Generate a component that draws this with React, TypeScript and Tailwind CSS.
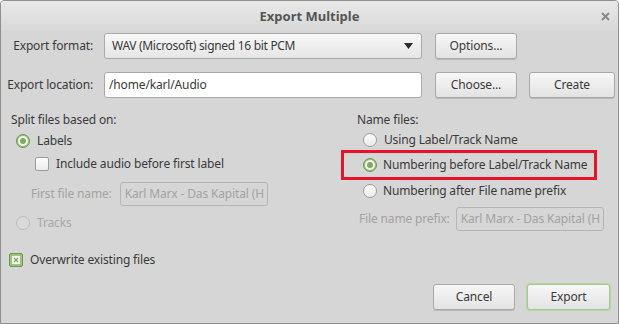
import { ReactNode } from "react";

const Radio = ({ checked = false, disabled = false }: { checked?: boolean; disabled?: boolean }) => {
  if (checked) {
    return (
      <span className="w-[14px] h-[14px] rounded-full border border-[#6f9552] bg-[#9cc47e] flex items-center justify-center shrink-0">
        <span className="w-[10px] h-[10px] rounded-full bg-[#f4f4f4] flex items-center justify-center">
          <span className="w-[6px] h-[6px] rounded-full bg-[#7fab5e]" />
        </span>
      </span>
    );
  }
  return (
    <span
      className={`w-[14px] h-[14px] rounded-full border shrink-0 ${
        disabled ? "border-[#bdbdbd] bg-[#d9d9d9]" : "border-[#9d9d9d] bg-gradient-to-b from-[#fcfcfc] to-[#ececec]"
      }`}
    />
  );
};

const Checkbox = ({ checked = false }: { checked?: boolean }) => {
  if (checked) {
    return (
      <span className="w-[14px] h-[14px] rounded-[2px] border border-[#6f9552] bg-[#9cc47e] flex items-center justify-center shrink-0">
        <span className="w-[8px] h-[8px] bg-[#f2f2f2] flex items-center justify-center">
          <svg width="6" height="6" viewBox="0 0 6 6">
            <path d="M1 1L5 5M5 1L1 5" stroke="#7fab5e" strokeWidth="1.4" />
          </svg>
        </span>
      </span>
    );
  }
  return <span className="w-[14px] h-[14px] rounded-[2px] border border-[#9d9d9d] bg-gradient-to-b from-[#fcfcfc] to-[#ececec] shrink-0" />;
};

const Button = ({ children, w, primary = false }: { children: ReactNode; w: string; primary?: boolean }) => (
  <div
    className={`${w} h-[26px] rounded-[3px] border bg-gradient-to-b from-[#f7f7f7] to-[#e3e3e3] shadow-[0_1px_0_#b8b8b8] flex items-center justify-center text-[#3a3a3a] ${
      primary ? "border-[#a6c98c] ring-1 ring-[#b8d6a2]" : "border-[#a9a9a9]"
    }`}>
    {children}
  </div>
);

const App = () => {
  return (
    <div
      className="w-[619px] h-[324px] bg-[#d6d6d6] border border-[#8e8e8e] rounded-t-[4px] flex flex-col text-[12px] tracking-[-0.15px] text-[#3a3a3a] overflow-hidden whitespace-nowrap"
      style={{ fontFamily: '"Noto Sans", "Open Sans", sans-serif' }}>
      {/* titlebar */}
      <div className="h-[30px] bg-gradient-to-b from-[#e9e9e9] to-[#d8d8d8] flex items-center shrink-0">
        <div className="w-[40px]" />
        <div className="flex-1 text-center font-bold text-[13px] tracking-normal text-[#555] pt-[2px]">Export Multiple</div>
        <div className="w-[40px] flex justify-center pl-[14px] pt-[1px]">
          <svg width="9" height="9" viewBox="0 0 9 9">
            <path d="M1 1L8 8M8 1L1 8" stroke="#8a8a8a" strokeWidth="2" />
          </svg>
        </div>
      </div>

      {/* format */}
      <div className="flex items-center mt-[2px] h-[26px]">
        <div className="w-[92px] text-right">Export format:</div>
        <div className="ml-[11px] w-[318px] h-[26px] rounded-[3px] border border-[#a9a9a9] bg-gradient-to-b from-[#f7f7f7] to-[#e6e6e6] flex items-center pl-[7px] pr-[8px]">
          <span className="flex-1 tracking-[-0.3px]">WAV (Microsoft) signed 16 bit PCM</span>
          <svg width="9" height="6" viewBox="0 0 9 6">
            <path d="M0 0H9L4.5 6Z" fill="#2a2a2a" />
          </svg>
        </div>
        <div className="ml-[13px]">
          <Button w="w-[82px]">Options...</Button>
        </div>
      </div>

      {/* location */}
      <div className="flex items-center mt-[13px] h-[26px]">
        <div className="w-[92px] text-right">Export location:</div>
        <div className="ml-[11px] w-[318px] h-[26px] rounded-[3px] border border-[#a9a9a9] bg-white flex items-center pl-[4px]">
          /home/karl/Audio
        </div>
        <div className="ml-[13px]">
          <Button w="w-[82px]">Choose...</Button>
        </div>
        <div className="ml-[12px]">
          <Button w="w-[86px]">Create</Button>
        </div>
      </div>

      {/* split / name */}
      <div className="flex mt-[12px]">
        <div className="w-[346px] pl-[10px] flex flex-col">
          <div className="h-[20px] flex items-center">Split files based on:</div>
          <div className="h-[22px] flex items-center gap-[7px] pl-[5px]">
            <Radio checked />
            <span>Labels</span>
          </div>
          <div className="h-[24px] flex items-center gap-[7px] pl-[24px]">
            <Checkbox />
            <span>Include audio before first label</span>
          </div>
          <div className="h-[36px] flex items-center pl-[20px] text-[#a3a3a3]">
            <span>First file name:</span>
            <div className="ml-[8px] w-[148px] h-[24px] rounded-[3px] border border-[#b5b5b5] flex items-center pl-[4px] overflow-hidden">
              Karl Marx - Das Kapital (H
            </div>
          </div>
          <div className="h-[22px] flex items-center gap-[7px] pl-[5px] text-[#a8a8a8]">
            <Radio disabled />
            <span>Tracks</span>
          </div>
        </div>

        <div className="flex flex-col">
          <div className="h-[20px] flex items-center pl-[10px]">Name files:</div>
          <div className="h-[20px] flex items-center gap-[7px] pl-[16px]">
            <Radio />
            <span>Using Label/Track Name</span>
          </div>
          <div className="ml-[-6px] w-[256px] h-[30px] border-[3px] border-[#e8132b] flex items-center gap-[6px] pl-[19px]">
            <Radio checked />
            <span>Numbering before Label/Track Name</span>
          </div>
          <div className="h-[22px] flex items-center gap-[6px] pl-[16px]">
            <Radio />
            <span>Numbering after File name prefix</span>
          </div>
          <div className="h-[34px] flex items-center pl-[12px] text-[#a3a3a3]">
            <span>File name prefix:</span>
            <div className="ml-[6px] w-[148px] h-[24px] rounded-[3px] border border-[#b5b5b5] flex items-center pl-[4px] overflow-hidden">
              Karl Marx - Das Kapital (H
            </div>
          </div>
        </div>
      </div>

      {/* overwrite */}
      <div className="h-[20px] mt-[14px] flex items-center gap-[7px] pl-[8px]">
        <Checkbox checked />
        <span>Overwrite existing files</span>
      </div>

      {/* buttons */}
      <div className="flex justify-end gap-[12px] pr-[8px] mt-[14px]">
        <Button w="w-[82px]">Cancel</Button>
        <Button w="w-[83px]" primary>
          Export
        </Button>
      </div>
    </div>
  );
};

export default App;
